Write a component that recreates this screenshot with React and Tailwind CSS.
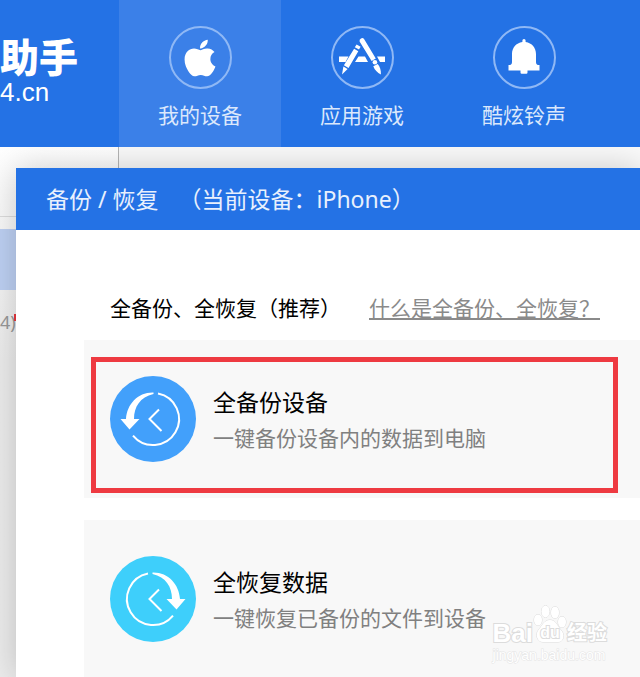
import React from 'react';
import { FaApple } from 'react-icons/fa';

function AppsIcon() {
  return (
    <svg viewBox="-32 -32 64 64" className="h-16 w-16" fill="#fff" stroke="none">
      <path d="M-23 -1.5h9.500l-3 5.500h-6.500zM-3.500 -1.5h6.500l3 5.500h-13zM15 -1.5h8v5.500h-5z" />
      <path d="M-5.4 -13.6l4 2.3-1.6 2.9-4.2-2.4zM-7.9 -9.3l4.2 2.5-9.8 16.7-4.6-2.6zM-18.6 8.6l4.2 2.4-5.6 5.6z" />
      <path d="M-2.4 -16.6a2.6 2.6 0 0 1 4.6-2.2l11.6 19.4-4.2 2.5z" />
      <circle cx="12.9" cy="4.2" r="2.3" />
      <path d="M11.3 8.2l4.4-2.2c2.4 3 3.4 6.4 3.2 10.6-3.6-2-6.2-4.6-7.6-8.4z" />
    </svg>
  );
}

function BellIcon() {
  return (
    <svg viewBox="-32 -32 64 64" className="h-16 w-16" fill="#fff">
      <path d="M-1.6 -17.5a1.6 1.6 0 0 1 3.2 0v1.6C8 -15 12 -10 12 -4v8c0 1.6 .6 2.6 1.8 3h1.7v5.5h-12V14.6a1.2 1.2 0 0 1-1.2 1.2h-4.6a1.2 1.2 0 0 1-1.2-1.2v-2.1h-12V7h1.7c1.2-.4 1.8-1.4 1.8-3v-8c0-6 4-11 10.4-11.9z" />
    </svg>
  );
}

function HistoryIcon({ mirrored }) {
  return (
    <svg viewBox="-43 -43 86 86" className="h-[86px] w-[86px]" fill="none" stroke="#fff" strokeWidth="2">
      <g transform={mirrored ? 'scale(-1 1)' : undefined}>
        <path d="M5 -25.5A26 26 0 1 1 -20 16.6" />
        <path
          d="M0.5 -26.5C-15 -27 -26 -15 -27 0H-32.5L-23.5 10.5L-13.5 0H-19C-19 -12 -13 -22 0.5 -25Z"
          fill="#fff"
          stroke="none"
        />
      </g>
      <path d="M6 -9.5L-3.5 0L8.5 12" />
    </svg>
  );
}

const tabs = [
  { name: '我的设备', icon: <FaApple className="h-[42px] w-[42px]" />, active: true },
  { name: '应用游戏', icon: <AppsIcon /> },
  { name: '酷炫铃声', icon: <BellIcon /> },
];

function TopBar() {
  return (
    <header className="flex h-[147px] bg-[#2472e5] text-white">
      <div className="w-[119px] shrink-0 pt-9">
        <div className="text-[39px] leading-[42px] font-black">助手</div>
        <div className="font-['Liberation_Sans'] text-[26px] leading-7">4.cn</div>
      </div>
      <nav className="flex">
        {tabs.map((tab) => (
          <a
            key={tab.name}
            href="#"
            className={`flex w-[162px] shrink-0 flex-col items-center pt-[26px] ${tab.active ? 'bg-[#3b80e8]' : ''}`}
          >
            <span className="flex h-[63px] w-[63px] items-center justify-center overflow-hidden rounded-full border-2 border-[#8fb8f5]">
              <span className="shrink-0">{tab.icon}</span>
            </span>
            <span className="mt-2.5 text-[21px] leading-8 text-[#dbe8fc]">{tab.name}</span>
          </a>
        ))}
      </nav>
    </header>
  );
}

function Sidebar() {
  return (
    <aside className="w-[119px] border-r border-[#b5b5b5] bg-linear-to-b from-white to-[#ececec] to-40%">
      <div className="h-[70px] border-b border-[#dcdcdc]" />
      <div className="mt-3 h-[61px] bg-[#bdd0f3]" />
      <div className="relative mt-4 text-[18px] leading-8 text-[#999]">
        4)
        <span className="absolute top-2 left-3.5 h-[7px] w-1 bg-[#e8383d]" />
      </div>
    </aside>
  );
}

function ActionCard({ title, desc, color, mirrored, highlighted }) {
  return (
    <button type="button" className="relative flex h-[158px] w-full items-start bg-[#f8f8f8] pt-9 pl-[26px] text-left">
      <span className={`shrink-0 rounded-full ${color}`}>
        <HistoryIcon mirrored={mirrored} />
      </span>
      <span className="ml-[17px] flex flex-col pt-2 whitespace-nowrap">
        <span className="text-[23px] leading-9 text-black">{title}</span>
        <span className="text-[21px] leading-9 text-[#808080]">{desc}</span>
      </span>
      {highlighted && (
        <span className="absolute top-[17px] right-[22px] bottom-[5px] left-[7px] border-5 border-[#ee3a41]" />
      )}
    </button>
  );
}

function BackupDialog() {
  return (
    <section className="bg-white shadow-[0_0_32px_rgba(0,0,0,0.2)]">
      <h1 className="flex h-[62px] items-center bg-[#2472e5] pl-[30px] text-[23px] whitespace-nowrap text-[#e8f0fd]">
        <span>备份 / 恢复</span>
        <span className="ml-5">（当前设备：iPhone）</span>
      </h1>
      <div className="pt-[62px] pl-[68px]">
        <div className="ml-[26px] flex gap-7 text-[21px] leading-8 whitespace-nowrap">
          <h2 className="text-black">全备份、全恢复（推荐）</h2>
          <a href="#" className="text-[#8a8a8a] underline underline-offset-2">
            什么是全备份、全恢复？
          </a>
        </div>
        <div className="mt-4 flex flex-col gap-[22px]">
          <ActionCard title="全备份设备" desc="一键备份设备内的数据到电脑" color="bg-[#42a0fb]" highlighted />
          <ActionCard title="全恢复数据" desc="一键恢复已备份的文件到设备" color="bg-[#3ecffb]" mirrored />
        </div>
      </div>
    </section>
  );
}

function Watermark() {
  return (
    <div className="absolute right-[33px] bottom-3.5 z-20 text-white [-webkit-text-stroke:2px_#dcdcdc] [paint-order:stroke]">
      <div className="flex items-end font-['Liberation_Sans','Noto_Sans_CJK_SC'] leading-7 font-bold">
        <span className="text-[26px]">Bai</span>
        <span className="relative mb-1 h-[38px] w-[34px]">
          <svg viewBox="0 0 34 38" className="h-full w-full overflow-visible" fill="#fff" stroke="#dcdcdc">
            <ellipse cx="5" cy="15" rx="4" ry="5.5" />
            <ellipse cx="12.5" cy="6.5" rx="4" ry="6" />
            <ellipse cx="22" cy="7.5" rx="4" ry="6" />
            <ellipse cx="29" cy="17" rx="4" ry="5.5" />
            <path d="M17 15C11 15 9 21 5.5 25C2 29 4 37 10 37H25C31 37 32 29 28 25C24 21 23 15 17 15Z" />
          </svg>
          <span className="absolute inset-x-0 bottom-0 text-center text-[16px] leading-5">du</span>
        </span>
        <span className="text-[20px]">经验</span>
      </div>
      <div className="font-['Liberation_Sans'] text-[14px] leading-4 [-webkit-text-stroke:1px_#e4e4e4]">
        jingyan.baidu.com
      </div>
    </div>
  );
}

export default function App() {
  return (
    <div className="relative flex h-screen flex-col overflow-hidden bg-white font-['Noto_Sans','Noto_Sans_CJK_SC',sans-serif]">
      <TopBar />
      <main className="grid flex-1 overflow-hidden bg-[#fafafa]">
        <div className="col-start-1 row-start-1 flex">
          <Sidebar />
        </div>
        <div className="z-10 col-start-1 row-start-1 grid pt-[21px] pl-4">
          <BackupDialog />
        </div>
      </main>
      <Watermark />
    </div>
  );
}
